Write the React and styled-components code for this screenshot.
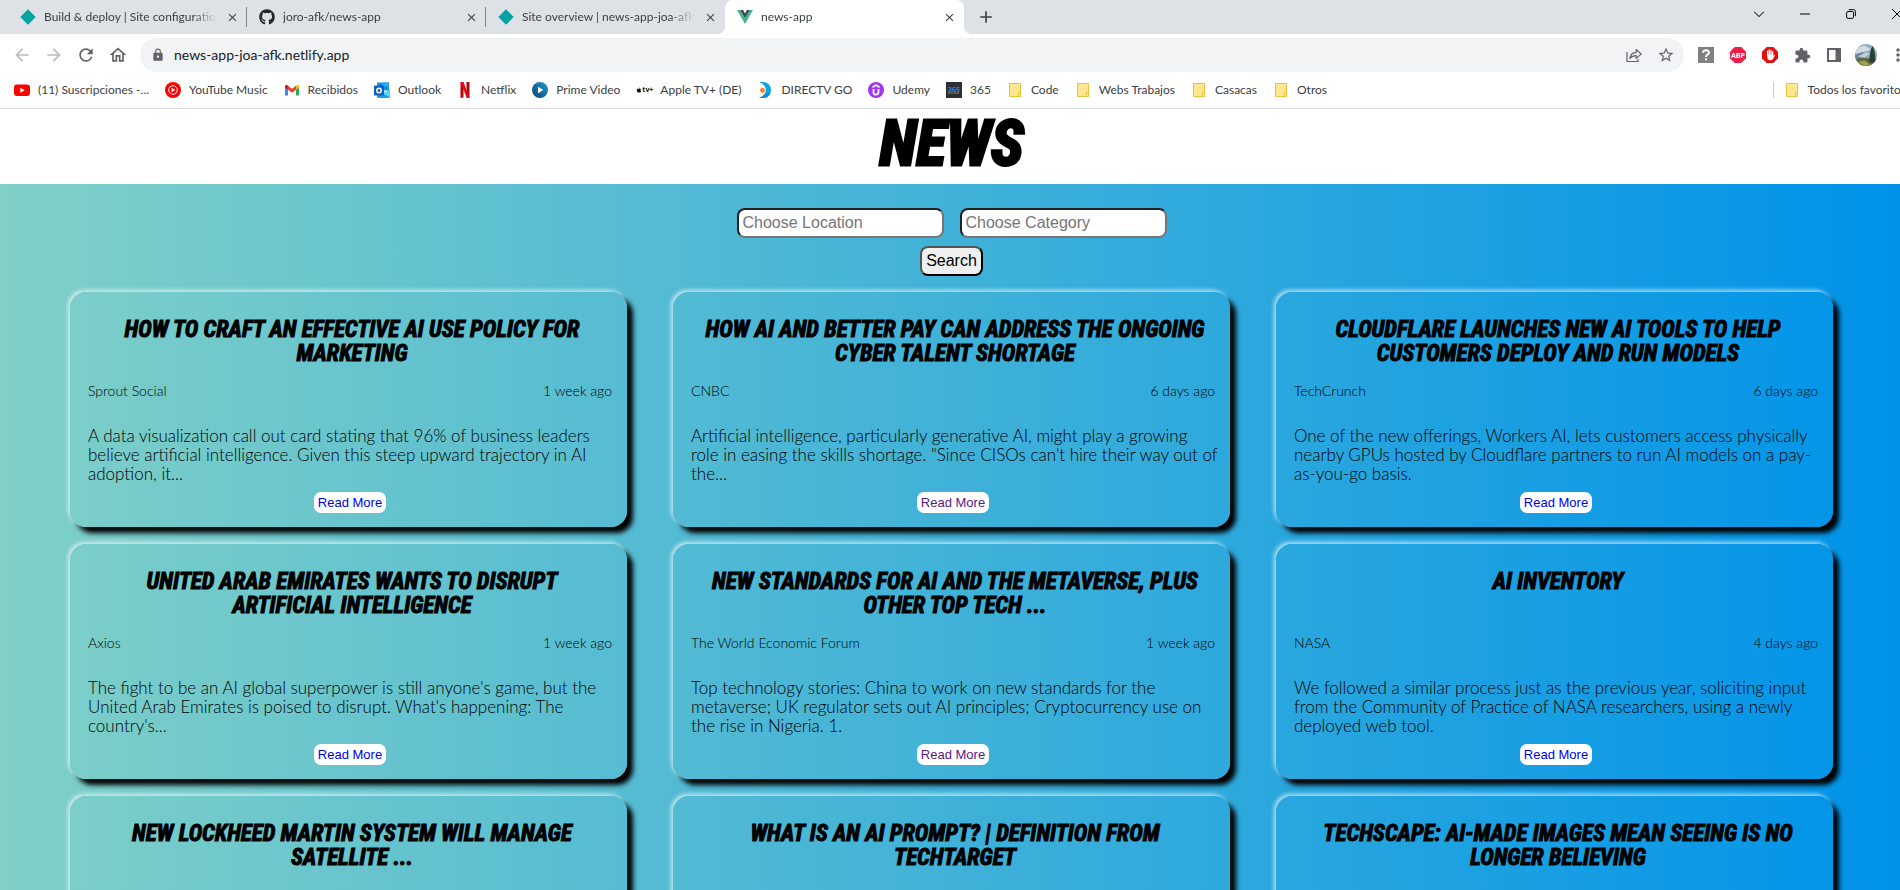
import React from "react";
import styled, { createGlobalStyle } from "styled-components";
import { FaGithub, FaApple } from "react-icons/fa";
import {
  MdArrowBack,
  MdArrowForward,
  MdRefresh,
  MdOutlineHome,
  MdLock,
  MdStarBorder,
  MdExtension,
  MdClose,
  MdAdd,
  MdMoreVert,
} from "react-icons/md";

const GlobalStyle = createGlobalStyle`
  *, *::before, *::after { box-sizing: border-box; }
  body { margin: 0; overflow: hidden; }
`;

const Window = styled.div`
  height: 100vh;
  overflow: hidden;
  display: flex;
  flex-direction: column;
  background: #fff;
`;

/* ---------- browser chrome ---------- */

const Chrome = styled.header`
  width: calc(100% + 20px);
  flex: none;
  font-family: Lato, "Open Sans", sans-serif;
  font-size: 12px;
  color: #3c4043;
`;

const TabStrip = styled.div`
  display: flex;
  height: 34px;
  padding-left: 8px;
  background: #dee1e6;
`;

const Tab = styled.div`
  position: relative;
  display: flex;
  align-items: center;
  width: 239px;
  height: 34px;
  padding: 0 7px 0 12px;
  background: ${(p) => (p.$active ? "#fff" : "transparent")};
  border-radius: 8px 8px 0 0;

  &::before,
  &::after {
    content: "";
    position: absolute;
    bottom: 0;
    width: 8px;
    height: 8px;
    display: ${(p) => (p.$active ? "block" : "none")};
  }
  &::before {
    left: -8px;
    background: radial-gradient(circle at 0 0, transparent 8px, #fff 8px);
  }
  &::after {
    right: -8px;
    background: radial-gradient(circle at 100% 0, transparent 8px, #fff 8px);
  }
`;

const TabTitle = styled.span`
  flex: 1;
  margin: 0 8px;
  overflow: hidden;
  white-space: nowrap;
  line-height: 16px;
  mask-image: linear-gradient(90deg, #000 calc(100% - 24px), transparent);
`;

const IconButton = styled.button`
  display: flex;
  align-items: center;
  justify-content: center;
  flex: none;
  width: ${(p) => p.$w || 32}px;
  height: ${(p) => p.$h || 28}px;
  padding: 0;
  border: 0;
  background: transparent;
  color: ${(p) => p.$color || "#5f6368"};
`;

const TabDivider = styled.span`
  position: absolute;
  right: 0;
  top: 7px;
  width: 1px;
  height: 20px;
  background: #80868b;
`;

const WindowControls = styled.div`
  display: flex;
  margin-left: auto;
`;

const Toolbar = styled.div`
  display: flex;
  align-items: center;
  height: 42px;
  padding: 0 6px;
`;

const Address = styled.label`
  display: flex;
  align-items: center;
  flex: 1;
  height: 34px;
  margin: 0 6px;
  padding: 0 2px 0 11px;
  border-radius: 17px;
  background: #f1f3f4;
  color: #5f6368;
`;

const AddressInput = styled.input`
  flex: 1;
  margin-left: 9px;
  padding: 0;
  border: 0;
  outline: 0;
  background: transparent;
  font: 14px/20px Lato, "Open Sans", sans-serif;
  color: #202124;
`;

const Avatar = styled.span`
  width: 22px;
  height: 22px;
  border-radius: 50%;
  overflow: hidden;
  svg { display: block; }
`;

const Bookmarks = styled.nav`
  display: flex;
  align-items: center;
  gap: 16px;
  height: 33px;
  padding: 0 14px 4px;
  border-bottom: 1px solid #dadce0;
`;

const Bookmark = styled.a`
  display: flex;
  align-items: center;
  gap: 8px;
  flex: none;
  color: #3c4043;
  text-decoration: none;
  white-space: nowrap;
  line-height: 16px;
  svg { flex: none; }
`;

const AllBookmarks = styled.div`
  display: flex;
  margin-left: auto;
  padding-left: 10px;
  border-left: 1px solid #c6cacf;
`;

/* ---------- page ---------- */

const Page = styled.div`
  flex: 1;
  min-height: 0;
  overflow: hidden;
  background: linear-gradient(90deg, #80d0c7 0%, #0093e9 100%);
`;

const Masthead = styled.div`
  height: 75px;
  padding: 0 67px 0 70px;
  background: #fff;
`;

const Brand = styled.h1`
  margin: 0;
  text-align: center;
  font: italic 700 62px/70px "Roboto Condensed", "Open Sans Condensed", sans-serif;
  color: #000;
  -webkit-text-stroke: 3px #000;
`;

const Main = styled.main`
  padding: 24px 67px 16px 70px;
`;

const SearchForm = styled.form`
  display: flex;
  flex-direction: column;
  align-items: center;
  gap: 8px;
  margin-bottom: 16px;
`;

const Fields = styled.div`
  display: flex;
  gap: 16px;
`;

const Field = styled.input`
  width: 207px;
  height: 30px;
  padding: 1px 4px;
  border: 2px inset #767676;
  border-radius: 8px;
  background: #fff;
  font: 16px/20px "Liberation Sans", Arial, sans-serif;
  &::placeholder { color: #757575; }
`;

const SearchButton = styled.button`
  height: 30px;
  padding: 0 4px;
  border: 2px outset #000;
  border-radius: 8px;
  background: #efefef;
  font: 16px/20px "Liberation Sans", Arial, sans-serif;
  color: #000;
`;

const Grid = styled.div`
  display: grid;
  grid-template-columns: repeat(3, 1fr);
  gap: 17px 46px;
`;

const Card = styled.article`
  display: flex;
  flex-direction: column;
  padding: 26px 15px 14px 18px;
  border-radius: 16px;
  box-shadow:
    -2px -2px 4px rgba(255, 255, 255, 0.65),
    6px 6px 5px #000;
  background: linear-gradient(90deg, #80d0c7 0%, #0093e9 100%) fixed;
`;

const Title = styled.h2`
  min-height: 48px;
  margin: 0 0 15px;
  padding: 0 6px 0 10px;
  text-align: center;
  text-transform: uppercase;
  font: italic 700 23px/24px "Roboto Condensed", "Open Sans Condensed", sans-serif;
  color: #000;
  -webkit-text-stroke: 1px #000;
`;

const Meta = styled.div`
  display: flex;
  justify-content: space-between;
  margin-bottom: 25px;
  font: 300 14px/20px Lato, "Open Sans", sans-serif;
  color: #000;
`;

const Summary = styled.p`
  min-height: 57px;
  margin: 0 -6px 9px 0;
  font: 300 17px/19px Lato, "Open Sans", sans-serif;
  color: #000;
  white-space: pre-line;
`;

const ReadMore = styled.a`
  align-self: center;
  padding: 0 4px;
  border-radius: 7px;
  background: #fff;
  font: 13px/21px "Liberation Sans", Arial, sans-serif;
  color: ${(p) => (p.$visited ? "#551a8b" : "#0000ee")};
  text-decoration: none;
`;

/* ---------- icons ---------- */

const Svg = ({ size = 16, children }) => (
  <svg width={size} height={size} viewBox="0 0 16 16" aria-hidden="true">
    {children}
  </svg>
);

const Netlify = () => (
  <Svg><path d="M8 0.3 15.7 8 8 15.7 0.3 8Z" fill="#05a3a2" /></Svg>
);
const Vue = () => (
  <Svg>
    <path d="M0 1h3.2L8 9.2 12.800 1H16L8 15Z" fill="#41b883" />
    <path d="M3.200 1H6l2 3.500L10 1h2.800L8 9.300Z" fill="#35495e" />
  </Svg>
);
const YouTube = () => (
  <Svg>
    <rect y="2.500" width="16" height="11.500" rx="3" fill="#f00" />
    <path d="M6.400 5.800v5l4.300-2.500Z" fill="#fff" />
  </Svg>
);
const YouTubeMusic = () => (
  <Svg>
    <circle cx="8" cy="8" r="8" fill="#f00" />
    <circle cx="8" cy="8" r="4.300" fill="none" stroke="#fff" strokeWidth="1" />
    <path d="M6.600 5.700v4.600L10.300 8Z" fill="#fff" />
  </Svg>
);
const Gmail = () => (
  <Svg>
    <path d="M1 4v9.500h3V7.200Z" fill="#4285f4" />
    <path d="M15 4v9.500h-3V7.200Z" fill="#34a853" />
    <path d="M4 3.700v4L8 10.800l4-3.100v-4L8 6.800Z" fill="#ea4335" />
    <path d="M1 4.500v1L4 7.700v-4L3.100 3C2.200 2.400 1 3.200 1 4.500Z" fill="#c5221f" />
    <path d="M15 4.500v1l-3 2.200v-4l.9-.7c.9-.6 2.100.2 2.100 1.500Z" fill="#fbbc04" />
  </Svg>
);
const Outlook = () => (
  <Svg>
    <path d="M3 0.500h12v8H3z" fill="#1490df" />
    <path d="M9 0.500h6v4H9z" fill="#28a8ea" />
    <path d="M3 4.500h6v4H3z" fill="#0364b8" />
    <path d="M3 8l6 3.500L16 7.800V15a1 1 0 0 1-1 1H4a1 1 0 0 1-1-1Z" fill="#1a9fe3" />
    <path d="M16 8v7.500L9 11.500Z" fill="#50d9ff" />
    <rect y="3.500" width="10" height="10" rx="1" fill="#0a62c0" />
    <circle cx="5" cy="8.500" r="2.300" fill="none" stroke="#fff" strokeWidth="1.400" />
  </Svg>
);
const Netflix = () => (
  <Svg>
    <path d="M3.500 0h3v15.500l-3 .5zM9.500 0h3v16l-3-.5z" fill="#b1060f" />
    <path d="M3.500 0h3l6 16-3-.5Z" fill="#e50914" />
  </Svg>
);
const Prime = () => (
  <Svg>
    <defs>
      <linearGradient id="prime" x1="1" y1="0" x2="0" y2="1">
        <stop offset="0" stopColor="#1aa0d0" />
        <stop offset="1" stopColor="#123f70" />
      </linearGradient>
    </defs>
    <circle cx="8" cy="8" r="8" fill="url(#prime)" />
    <path d="M6 4.800v6.400L11.300 8Z" fill="#fff" />
  </Svg>
);
const AppleTvBox = styled.span`
  display: flex;
  align-items: center;
  width: 16px;
  height: 16px;
  font: 700 7px/8px "Open Sans", sans-serif;
  color: #111;
`;
const AppleTv = () => (
  <AppleTvBox aria-hidden="true">
    <FaApple size={6} />tv+
  </AppleTvBox>
);
const Directv = () => (
  <Svg>
    <path d="M2 0h4a8 8 0 0 1 0 16H2c4-1.500 6.800-4 6.800-8S6 1.500 2 0Z" fill="#00a6e6" />
    <path d="M13.500 11A8 8 0 0 1 6 16H2c2.500-1 4.500-2.200 5.700-4Z" fill="#1b86d8" />
    <circle cx="5.500" cy="8.300" r="2.900" fill="#f58220" stroke="#fff" strokeWidth="0.800" />
  </Svg>
);
const Udemy = () => (
  <Svg>
    <circle cx="8" cy="8" r="8" fill="#a435f0" />
    <path d="M4.500 5.200 8 3.200l3.500 2" fill="none" stroke="#fff" strokeWidth="1.600" />
    <path d="M5.500 7v3.200a2.500 2.500 0 0 0 5 0V7" fill="none" stroke="#fff" strokeWidth="1.800" />
  </Svg>
);
const Badge365 = () => (
  <Svg>
    <rect width="16" height="16" fill="#2c3036" />
    <text x="8" y="9.500" textAnchor="middle" fontFamily="Open Sans, sans-serif" fontWeight="700" fontSize="7" fill="#1691cc">365</text>
    <path d="M2 11h12" stroke="#8a7a50" strokeWidth="1.500" strokeDasharray="2 1" />
  </Svg>
);
const Folder = () => (
  <Svg>
    <path d="M2.500 1.500h11v13h-11Z" fill="#ffe791" stroke="#e8c33f" />
    <path d="M11.500 10.500h2v4h-2Z" fill="#fff0b5" stroke="#e8c33f" />
  </Svg>
);
const Share = () => (
  <Svg>
    <path d="M1 5v9.500h11V12" fill="none" stroke="#5f6368" strokeWidth="1.200" />
    <path d="M4 11.500c.3-3.800 2.600-6 6.200-6.200V2.500l5 4.600-5 4.300V8.700C7.600 8.700 5.600 9.500 4 11.500Z" fill="none" stroke="#5f6368" strokeWidth="1.200" strokeLinejoin="round" />
  </Svg>
);
const Question = () => (
  <Svg>
    <rect width="16" height="16" fill="#808080" />
    <path d="M5 5.700C5 2.500 11 2.500 11 5.500 11 7.500 8 7.600 8 10" fill="none" stroke="#fff" strokeWidth="2" />
    <rect x="7" y="11.300" width="2" height="2" fill="#fff" />
  </Svg>
);
const octagon = "M4.700 0h6.600L16 4.700v6.600L11.300 16H4.700L0 11.300V4.700Z";
const AdBlockPlus = () => (
  <Svg>
    <path d={octagon} fill="#ed1e45" />
    <text x="8" y="10.600" textAnchor="middle" fontFamily="Open Sans, sans-serif" fontWeight="700" fontSize="7" fill="#fff">ABP</text>
  </Svg>
);
const AdBlock = () => (
  <Svg>
    <path d={octagon} fill="#e40d0d" />
    <path d="M5.600 8.500V4.200M7.300 8V3M9 8V3.300M10.600 8.500V4.700" stroke="#fff" strokeWidth="1.300" strokeLinecap="round" />
    <path d="M5 7.500h6.200V9l1.300-1.300.6.600-2.400 4c-1 1.400-4.300 1.300-5.100-.3Z" fill="#fff" />
  </Svg>
);
const SidePanel = () => (
  <Svg>
    <path d="M1 1h14v14H1Zm2 2v10h6.500V3Z" fill="#5f6368" fillRule="evenodd" />
  </Svg>
);
const Portrait = () => (
  <Svg size={22}>
    <rect width="16" height="16" fill="#8fa9c2" />
    <path d="M0 3 7 1l5 3-6 2-6 1Z" fill="#d3dbe0" />
    <path d="M0 8 5 6l6 1-5 4H0Z" fill="#6685a6" />
    <path d="M2 9 8 6l3 1-4 3Z" fill="#c2cedb" />
    <path d="M0 11 5 10l11 1v5H0Z" fill="#5d6b38" />
    <path d="M10 13 11.500 4 13 1l1.500 6 .5 7Z" fill="#29402f" />
    <path d="M2 13l5-1 4 3-4 1Z" fill="#a99a55" />
  </Svg>
);
const Caret = () => (
  <Svg size={12}><path d="M1.500 5 8 11.500 14.500 5" fill="none" stroke="#222" strokeWidth="1.400" /></Svg>
);
const Minimise = () => (
  <Svg size={10}><path d="M0 8h16" stroke="#000" strokeWidth="1.600" /></Svg>
);
const Restore = () => (
  <Svg size={10}>
    <rect x="1" y="4" width="11" height="11" rx="2" fill="none" stroke="#000" strokeWidth="1.600" />
    <path d="M4.500 1H12a3 3 0 0 1 3 3v7.500" fill="none" stroke="#000" strokeWidth="1.600" />
  </Svg>
);
const CloseWindow = () => (
  <Svg size={10}><path d="M0 0l16 16M16 0 0 16" stroke="#000" strokeWidth="1.600" /></Svg>
);

/* ---------- data ---------- */

const tabs = [
  { title: "Build & deploy | Site configuration", icon: <Netlify />, divider: true },
  { title: "joro-afk/news-app", icon: <FaGithub size={16} color="#24292f" />, divider: true },
  { title: "Site overview | news-app-joa-afk", icon: <Netlify /> },
  { title: "news-app", icon: <Vue />, active: true },
];

const bookmarks = [
  ["(11) Suscripciones -...", <YouTube />],
  ["YouTube Music", <YouTubeMusic />],
  ["Recibidos", <Gmail />],
  ["Outlook", <Outlook />],
  ["Netflix", <Netflix />],
  ["Prime Video", <Prime />],
  ["Apple TV+ (DE)", <AppleTv />],
  ["DIRECTV GO", <Directv />],
  ["Udemy", <Udemy />],
  ["365", <Badge365 />],
  ["Code", <Folder />],
  ["Webs Trabajos", <Folder />],
  ["Casacas", <Folder />],
  ["Otros", <Folder />],
];

const articles = [
  {
    title: "How to craft an effective AI use policy for marketing",
    source: "Sprout Social",
    date: "1 week ago",
    text: "A data visualization call out card stating that 96% of business leaders believe artificial intelligence. Given this steep upward trajectory in AI adoption, it...",
  },
  {
    title: "How AI and better pay can address the ongoing cyber talent shortage",
    source: "CNBC",
    date: "6 days ago",
    text: "Artificial intelligence, particularly generative AI, might play a growing\nrole in easing the skills shortage. \"Since CISOs can't hire their way out of the...",
    visited: true,
  },
  {
    title: "Cloudflare launches new AI tools to help customers deploy and run models",
    source: "TechCrunch",
    date: "6 days ago",
    text: "One of the new offerings, Workers AI, lets customers access physically nearby GPUs hosted by Cloudflare partners to run AI models on a pay-as-you-go basis.",
  },
  {
    title: "United Arab Emirates wants to disrupt artificial intelligence",
    source: "Axios",
    date: "1 week ago",
    text: "The fight to be an AI global superpower is still anyone's game, but the United Arab Emirates is poised to disrupt. What's happening: The country's...",
  },
  {
    title: "New standards for AI and the metaverse, plus other top tech ...",
    source: "The World Economic Forum",
    date: "1 week ago",
    text: "Top technology stories: China to work on new standards for the metaverse; UK regulator sets out AI principles; Cryptocurrency use on the rise in Nigeria. 1.",
    visited: true,
  },
  {
    title: "AI Inventory",
    source: "NASA",
    date: "4 days ago",
    text: "We followed a similar process just as the previous year, soliciting input from the Community of Practice of NASA researchers, using a newly deployed web tool.",
  },
  { title: "New Lockheed Martin system will manage satellite ...", source: "Space.com", date: "6 days ago", text: "" },
  { title: "What is an AI prompt? | Definition from TechTarget", source: "TechTarget", date: "6 days ago", text: "" },
  { title: "TechScape: AI-made images mean seeing is no longer believing", source: "The Guardian", date: "1 week ago", text: "" },
];

/* ---------- app ---------- */

export default function App() {
  return (
    <Window>
      <GlobalStyle />
      <Chrome>
        <TabStrip>
          {tabs.map((t) => (
            <Tab key={t.title} $active={t.active}>
              {t.icon}
              <TabTitle>{t.title}</TabTitle>
              <IconButton $w={16} $h={16} $color="#3c4043" aria-label="Close tab">
                <MdClose size={13} />
              </IconButton>
              {t.divider && <TabDivider />}
            </Tab>
          ))}
          <IconButton $w={44} $h={34} $color="#3c4043" aria-label="New tab"><MdAdd size={20} /></IconButton>
          <WindowControls>
            <IconButton $w={46} aria-label="Search tabs"><Caret /></IconButton>
            <IconButton $w={46} aria-label="Minimise"><Minimise /></IconButton>
            <IconButton $w={46} aria-label="Restore"><Restore /></IconButton>
            <IconButton $w={46} aria-label="Close"><CloseWindow /></IconButton>
          </WindowControls>
        </TabStrip>
        <Toolbar>
          <IconButton $color="#babcbe" aria-label="Back"><MdArrowBack size={20} /></IconButton>
          <IconButton $color="#babcbe" aria-label="Forward"><MdArrowForward size={20} /></IconButton>
          <IconButton aria-label="Reload"><MdRefresh size={20} /></IconButton>
          <IconButton aria-label="Home"><MdOutlineHome size={20} /></IconButton>
          <Address>
            <MdLock size={14} />
            <AddressInput aria-label="Address" defaultValue="news-app-joa-afk.netlify.app" />
            <IconButton aria-label="Share"><Share /></IconButton>
            <IconButton aria-label="Bookmark this page"><MdStarBorder size={18} /></IconButton>
          </Address>
          <IconButton aria-label="Unknown extension"><Question /></IconButton>
          <IconButton aria-label="Adblock Plus"><AdBlockPlus /></IconButton>
          <IconButton aria-label="AdBlock"><AdBlock /></IconButton>
          <IconButton aria-label="Extensions"><MdExtension size={17} /></IconButton>
          <IconButton aria-label="Side panel"><SidePanel /></IconButton>
          <IconButton aria-label="Profile"><Avatar><Portrait /></Avatar></IconButton>
          <IconButton aria-label="Menu"><MdMoreVert size={20} /></IconButton>
        </Toolbar>
        <Bookmarks>
          {bookmarks.map(([name, icon]) => (
            <Bookmark key={name} href="#">{icon}{name}</Bookmark>
          ))}
          <AllBookmarks>
            <Bookmark href="#"><Folder />Todos los favoritos</Bookmark>
          </AllBookmarks>
        </Bookmarks>
      </Chrome>
      <Page>
        <Masthead><Brand>NEWS</Brand></Masthead>
        <Main>
          <SearchForm onSubmit={(e) => e.preventDefault()}>
            <Fields>
              <Field aria-label="Location" placeholder="Choose Location" />
              <Field aria-label="Category" placeholder="Choose Category" />
            </Fields>
            <SearchButton type="submit">Search</SearchButton>
          </SearchForm>
          <Grid>
            {articles.map((a) => (
              <Card key={a.title}>
                <Title>{a.title}</Title>
                <Meta><span>{a.source}</span><span>{a.date}</span></Meta>
                <Summary>{a.text}</Summary>
                <ReadMore href="#" $visited={a.visited}>Read More</ReadMore>
              </Card>
            ))}
          </Grid>
        </Main>
      </Page>
    </Window>
  );
}
